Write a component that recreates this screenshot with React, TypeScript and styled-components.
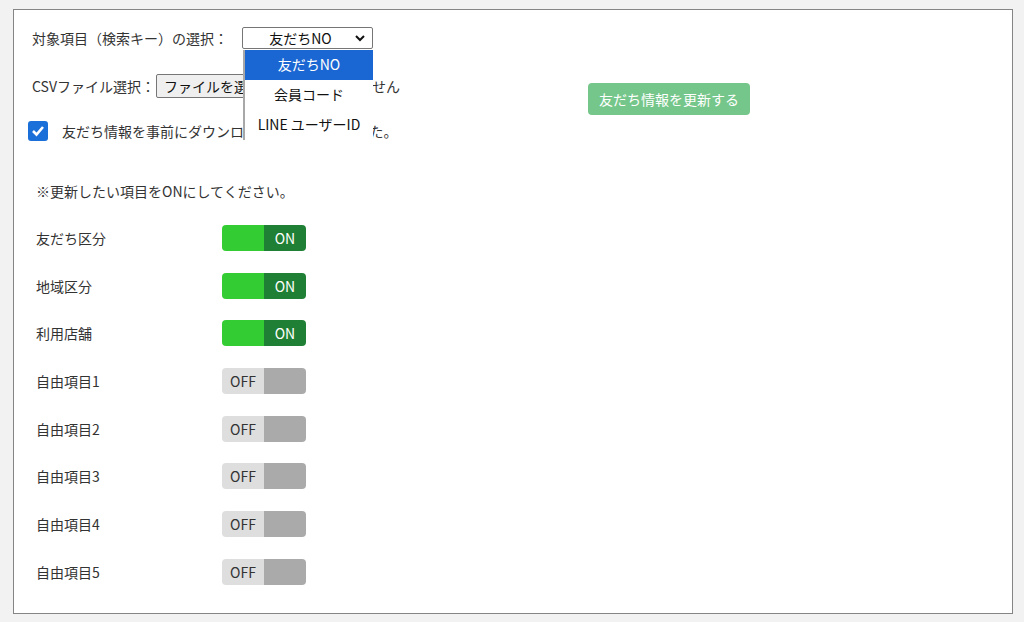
import styled, { createGlobalStyle } from 'styled-components';

const GlobalStyle = createGlobalStyle`
    html, body {
        margin: 0;
        padding: 0;
        background: #f2f2f2;
    }
    body {
        font-family: "Noto Sans CJK JP", "Noto Sans", sans-serif;
        font-size: 14px;
        color: #333;
    }
`;

const Panel = styled.main`
    box-sizing: border-box;
    width: 1000px;
    height: 605px;
    margin: 9px 0 0 13px;
    background: #fff;
    border: 1px solid #858585;
    padding: 17px 18px 0 18px;
`;

const TopSection = styled.section`
    display: flex;
    align-items: flex-start;
`;

const FormColumn = styled.div`
    display: flex;
    flex-direction: column;
    width: 556px;
`;

const FormRow = styled.div<{ gapTop?: number; height: number }>`
    display: flex;
    align-items: center;
    height: ${(p) => p.height}px;
    margin-top: ${(p) => p.gapTop ?? 0}px;
    white-space: nowrap;
`;

const Label = styled.span`
    line-height: 20px;
`;

const SelectWrap = styled.div`
    position: relative;
    margin-left: 14px;
`;

const SelectBox = styled.div`
    box-sizing: border-box;
    width: 131px;
    height: 22px;
    padding-right: 14px;
    border: 1px solid #767676;
    border-radius: 2px;
    display: flex;
    align-items: center;
    justify-content: center;
    position: relative;
    color: #111;
`;

const Chevron = styled.svg`
    position: absolute;
    right: 7px;
    top: 7px;
`;

const DropList = styled.ul`
    position: absolute;
    top: 23px;
    left: 1px;
    width: 130px;
    margin: 0;
    padding: 0;
    list-style: none;
    background: #fff;
    border-left: 2px solid #a8a8a8;
    box-sizing: border-box;
    z-index: 10;
`;

const DropItem = styled.li<{ active?: boolean }>`
    height: 30px;
    line-height: 29px;
    text-align: center;
    background: ${(p) => (p.active ? '#1a67d4' : '#fff')};
    color: ${(p) => (p.active ? '#fff' : '#111')};
`;

const FileButton = styled.button`
    box-sizing: border-box;
    height: 24px;
    margin-left: 1px;
    padding: 0 7px;
    font: inherit;
    color: #111;
    background: #efefef;
    border: 1px solid #767676;
    border-radius: 2px;
`;

const FileStatus = styled.span`
    margin-left: 5px;
`;

const CheckBox = styled.span`
    box-sizing: border-box;
    width: 20px;
    height: 20px;
    margin-left: -4px;
    border-radius: 3px;
    background: #1a6fd8;
    display: inline-flex;
    align-items: center;
    justify-content: center;
`;

const CheckLabel = styled.span`
    margin-left: 14px;
`;

const UpdateButton = styled.button`
    margin-top: 56px;
    width: 162px;
    height: 32px;
    border: none;
    border-radius: 4px;
    background: #75c68a;
    color: #fff;
    font: inherit;
    font-size: 14px;
`;

const Note = styled.p`
    margin: 40px 0 0 4px;
    line-height: 20px;
`;

const ToggleList = styled.div`
    display: flex;
    flex-direction: column;
    gap: 21.7px;
    margin: 24px 0 0 4px;
`;

const ToggleRow = styled.div`
    display: flex;
    align-items: center;
    height: 26px;
`;

const ToggleName = styled.span`
    width: 186px;
`;

const Toggle = styled.div`
    display: flex;
    width: 84px;
    height: 26px;
    border-radius: 4px;
    overflow: hidden;
`;

const ToggleHalf = styled.span<{ bg: string; fg?: string }>`
    flex: 1;
    display: flex;
    align-items: center;
    justify-content: center;
    background: ${(p) => p.bg};
    color: ${(p) => p.fg ?? '#333'};
`;

const items: { name: string; on: boolean }[] = [
    { name: '友だち区分', on: true },
    { name: '地域区分', on: true },
    { name: '利用店舗', on: true },
    { name: '自由項目1', on: false },
    { name: '自由項目2', on: false },
    { name: '自由項目3', on: false },
    { name: '自由項目4', on: false },
    { name: '自由項目5', on: false },
];

function Switch({ on }: { on: boolean }) {
    return on ? (
        <Toggle>
            <ToggleHalf bg="#33cc33" />
            <ToggleHalf bg="#1f7f34" fg="#fff">ON</ToggleHalf>
        </Toggle>
    ) : (
        <Toggle>
            <ToggleHalf bg="#dedede">OFF</ToggleHalf>
            <ToggleHalf bg="#aaaaaa" />
        </Toggle>
    );
}

export default function App() {
    return (
        <>
            <GlobalStyle />
            <Panel>
                <TopSection>
                    <FormColumn>
                        <FormRow height={22}>
                            <Label>対象項目（検索キー）の選択：</Label>
                            <SelectWrap>
                                <SelectBox>
                                    友だちNO
                                    <Chevron width="10" height="7" viewBox="0 0 10 7">
                                        <polyline points="1,1 5,5 9,1" fill="none" stroke="#111" strokeWidth="2" />
                                    </Chevron>
                                </SelectBox>
                                <DropList>
                                    <DropItem active>友だちNO</DropItem>
                                    <DropItem>会員コード</DropItem>
                                    <DropItem>LINE ユーザーID</DropItem>
                                </DropList>
                            </SelectWrap>
                        </FormRow>
                        <FormRow height={24} gapTop={25}>
                            <Label>CSVファイル選択：</Label>
                            <FileButton>ファイルを選択</FileButton>
                            <FileStatus>選択されていません</FileStatus>
                        </FormRow>
                        <FormRow height={20} gapTop={23}>
                            <CheckBox>
                                <svg width="14" height="12" viewBox="0 0 14 12">
                                    <polyline points="2,6 5.5,9.5 12,2" fill="none" stroke="#fff" strokeWidth="2.6" />
                                </svg>
                            </CheckBox>
                            <CheckLabel>友だち情報を事前にダウンロードして確認しました。</CheckLabel>
                        </FormRow>
                    </FormColumn>
                    <UpdateButton>友だち情報を更新する</UpdateButton>
                </TopSection>
                <Note>※更新したい項目をONにしてください。</Note>
                <ToggleList>
                    {items.map((it) => (
                        <ToggleRow key={it.name}>
                            <ToggleName>{it.name}</ToggleName>
                            <Switch on={it.on} />
                        </ToggleRow>
                    ))}
                </ToggleList>
            </Panel>
        </>
    );
}
